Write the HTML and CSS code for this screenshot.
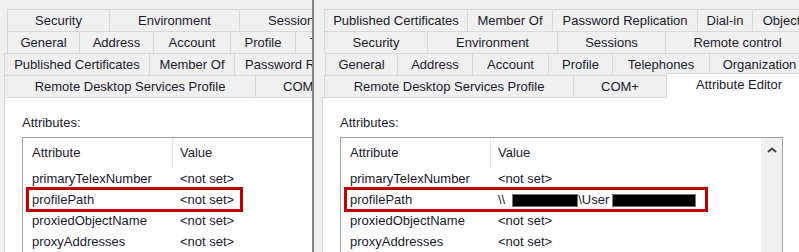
FILE: index.html
```html
<!DOCTYPE html>
<html lang="en">
<head>
    <meta charset="UTF-8">
    <meta name="viewport" content="width=device-width, initial-scale=1.0">
    <title>profilePath - Attribute Editor</title>
    <link rel="stylesheet" href="styles.css">
</head>
<body>
    <div class="screen">
        <!-- before: profilePath not set -->
        <section class="panel panel-left">
            <div class="tabs">
                <div class="tab-row row-l1">
                    <div class="tab">Security</div>
                    <div class="tab">Environment</div>
                    <div class="tab cut">Sessions</div>
                </div>
                <div class="tab-row row-l2">
                    <div class="tab">General</div>
                    <div class="tab">Address</div>
                    <div class="tab">Account</div>
                    <div class="tab">Profile</div>
                    <div class="tab cut">T</div>
                </div>
                <div class="tab-row row-l3">
                    <div class="tab">Published Certificates</div>
                    <div class="tab">Member Of</div>
                    <div class="tab cut">Password R</div>
                </div>
                <div class="tab-row row-l4">
                    <div class="tab">Remote Desktop Services Profile</div>
                    <div class="tab cut">COM+</div>
                </div>
            </div>
            <div class="pane">
                <div class="pane-label">Attributes:</div>
                <div class="list">
                    <div class="list-body">
                        <div class="list-head">
                            <span class="col-attr">Attribute</span>
                            <span class="col-value">Value</span>
                        </div>
                        <div class="list-row">
                            <span class="col-attr">primaryTelexNumber</span>
                            <span class="col-value">&lt;not set&gt;</span>
                        </div>
                        <div class="list-row">
                            <span class="col-attr">profilePath</span>
                            <span class="col-value">&lt;not set&gt;</span>
                        </div>
                        <div class="list-row">
                            <span class="col-attr">proxiedObjectName</span>
                            <span class="col-value">&lt;not set&gt;</span>
                        </div>
                        <div class="list-row">
                            <span class="col-attr">proxyAddresses</span>
                            <span class="col-value">&lt;not set&gt;</span>
                        </div>
                    </div>
                    <div class="callout callout-left"></div>
                </div>
            </div>
        </section>

        <div class="divider"></div>

        <!-- after: profilePath set -->
        <section class="panel panel-right">
            <div class="tabs">
                <div class="tab-row row-r1">
                    <div class="tab">Published Certificates</div>
                    <div class="tab">Member Of</div>
                    <div class="tab">Password Replication</div>
                    <div class="tab">Dial-in</div>
                    <div class="tab">Object</div>
                </div>
                <div class="tab-row row-r2">
                    <div class="tab">Security</div>
                    <div class="tab">Environment</div>
                    <div class="tab">Sessions</div>
                    <div class="tab">Remote control</div>
                </div>
                <div class="tab-row row-r3">
                    <div class="tab">General</div>
                    <div class="tab">Address</div>
                    <div class="tab">Account</div>
                    <div class="tab">Profile</div>
                    <div class="tab">Telephones</div>
                    <div class="tab">Organization</div>
                </div>
                <div class="tab-row row-r4">
                    <div class="tab">Remote Desktop Services Profile</div>
                    <div class="tab">COM+</div>
                    <div class="tab selected">Attribute Editor</div>
                </div>
            </div>
            <div class="pane">
                <div class="pane-label">Attributes:</div>
                <div class="list">
                    <div class="list-body">
                        <div class="list-head">
                            <span class="col-attr">Attribute</span>
                            <span class="col-value">Value</span>
                        </div>
                        <div class="list-row">
                            <span class="col-attr">primaryTelexNumber</span>
                            <span class="col-value">&lt;not set&gt;</span>
                        </div>
                        <div class="list-row">
                            <span class="col-attr">profilePath</span>
                            <span class="col-value">\\<span class="redact redact-host"></span>\User<span class="redact redact-user"></span></span>
                        </div>
                        <div class="list-row">
                            <span class="col-attr">proxiedObjectName</span>
                            <span class="col-value">&lt;not set&gt;</span>
                        </div>
                        <div class="list-row">
                            <span class="col-attr">proxyAddresses</span>
                            <span class="col-value">&lt;not set&gt;</span>
                        </div>
                    </div>
                    <div class="scrollbar">
                        <div class="scroll-btn">
                            <svg width="10" height="6" viewBox="0 0 10 6">
                                <polyline points="1,5 5,1.5 9,5" fill="none" stroke="#444" stroke-width="2"/>
                            </svg>
                        </div>
                    </div>
                    <div class="callout callout-right"></div>
                </div>
            </div>
        </section>
    </div>
</body>
</html>
```

FILE: styles.css
```css
body {
    margin: 0;
    font-family: "Liberation Sans", Arial, sans-serif;
    font-size: 13px;
    color: #1a1a2e;
    background-color: #f0f0f0;
}
.screen {
    display: flex;
    width: 799px;
    height: 252px;
    overflow: hidden;
}
.panel {
    display: flex;
    flex-direction: column;
    overflow: hidden;
    background-color: #f0f0f0;
}
.panel-left {
    flex: none;
    width: 312px;
}
.panel-right {
    flex: 1;
}
.divider {
    flex: none;
    width: 2px;
    background-color: #858585;
}
.tabs {
    padding-top: 9px;
}
.tab-row {
    display: grid;
    height: 22px;
    white-space: nowrap;
}
.tab {
    box-sizing: border-box;
    border-top: 1px solid #d9d9d9;
    border-left: 1px solid #d9d9d9;
    line-height: 21px;
    text-align: center;
    background-color: #f0f0f0;
}
.tab.selected {
    height: 25px;
    margin-top: -2px;
    margin-bottom: -1px;
    background-color: #fff;
    border-right: 1px solid #d9d9d9;
    z-index: 1;
}
/* last tab of a row, clipped at the window edge */
.tab.cut {
    overflow: hidden;
    text-align: left;
}
.row-l1 { margin-left: 7px; grid-template-columns: 102px 130px 1fr; }
.row-l2 { margin-left: 7px; grid-template-columns: 72px 74px 77px 65px 1fr; }
.row-l3 { margin-left: 4px; grid-template-columns: 145px 85px 1fr; }
.row-l4 { margin-left: 4px; grid-template-columns: 251px 1fr; }
.row-l1 .cut { padding-left: 28px; }
.row-l2 .cut { padding-left: 14px; }
.row-l3 .cut { padding-left: 10px; }
.row-l4 .cut { padding-left: 27px; }
.row-r1 { margin-left: 10px; grid-template-columns: 143px 85px 145px 55px 58px; }
.row-r2 { margin-left: 10px; grid-template-columns: 103px 130px 108px 144px; }
.row-r3 { margin-left: 11px; grid-template-columns: 72px 75px 76px 64px 97px 100px; }
.row-r4 { margin-left: 10px; grid-template-columns: 249px 93px 146px; }
.pane {
    flex: 1;
    padding: 17px 0 0 17px;
    background-color: #fff;
    border-top: 1px solid #d9d9d9;
    border-left: 1px solid #d9d9d9;
}
.panel-left .pane {
    margin-left: 4px;
}
.panel-right .pane {
    margin-left: 8px;
}
.pane-label {
    line-height: 15px;
    margin-bottom: 7px;
}
.list {
    position: relative;
    display: flex;
    width: 441px;
    height: 140px;
    border: 1px solid #a0a0a0;
    background-color: #fff;
}
.panel-left .list {
    width: 290px;
    border-right: none;
}
.list-body {
    flex: 1;
    white-space: nowrap;
}
.list-head,
.list-row {
    display: grid;
    grid-template-columns: 150px 1fr;
}
.list-head {
    height: 30px;
    line-height: 30px;
}
.list-row {
    height: 21px;
    line-height: 21px;
}
.col-attr {
    padding-left: 9px;
}
.col-value {
    padding-left: 7px;
}
.list-head .col-attr {
    border-right: 1px solid #e5e5e5;
}
.scrollbar {
    flex: none;
    width: 21px;
    background-color: #f0f0f0;
}
.scroll-btn {
    display: flex;
    align-items: center;
    justify-content: center;
    height: 24px;
}
.redact {
    display: inline-block;
    box-sizing: border-box;
    height: 13px;
    vertical-align: middle;
    background-color: #000;
    border: 1px solid #777;
}
.redact-host {
    width: 66px;
    margin-left: 7px;
}
.redact-user {
    width: 84px;
    margin-left: 3px;
}
.callout {
    position: absolute;
    top: 49px;
    left: 3px;
    box-sizing: border-box;
    height: 25px;
    border: 3px solid #c00000;
}
.callout-left {
    width: 217px;
}
.callout-right {
    width: 364px;
}
```
